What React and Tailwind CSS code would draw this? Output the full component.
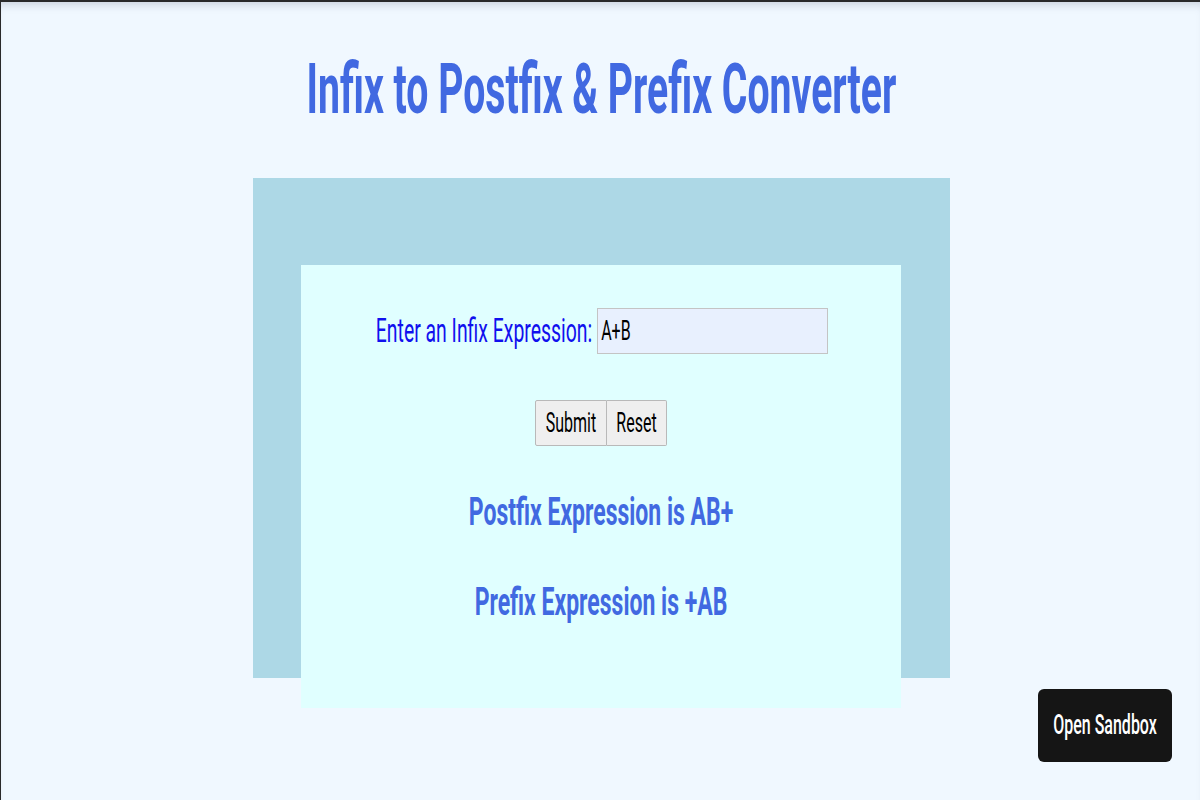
import { useState } from 'react';

// the shot is stretched tall, so text gets a vertical scale
const Tall = ({ children, className = 'scale-y-[1.7]' }) => (
  <span className={`inline-block origin-center ${className}`}>{children}</span>
);

const toPostfix = (expr) => {
  const prec = { '+': 1, '-': 1, '*': 2, '/': 2, '^': 3 };
  const out = [];
  const stack = [];
  for (const ch of expr.replace(/\s+/g, '')) {
    if (/[A-Za-z0-9]/.test(ch)) out.push(ch);
    else if (ch === '(') stack.push(ch);
    else if (ch === ')') {
      while (stack.length && stack[stack.length - 1] !== '(') out.push(stack.pop());
      stack.pop();
    } else {
      while (stack.length && stack[stack.length - 1] !== '(' && prec[stack[stack.length - 1]] >= prec[ch]) out.push(stack.pop());
      stack.push(ch);
    }
  }
  while (stack.length) out.push(stack.pop());
  return out.join('');
};

const toPrefix = (expr) => {
  const rev = expr
    .split('')
    .reverse()
    .map((c) => (c === '(' ? ')' : c === ')' ? '(' : c))
    .join('');
  return toPostfix(rev).split('').reverse().join('');
};

export default function App() {
  const [value, setValue] = useState('A+B');
  const [result, setResult] = useState({ post: 'AB+', pre: '+AB' });

  const handleSubmit = () => setResult({ post: toPostfix(value), pre: toPrefix(value) });
  const handleReset = () => {
    setValue('');
    setResult({ post: '', pre: '' });
  };

  return (
    <div
      className="relative h-[800px] w-[1200px] overflow-hidden border-t-2 border-l border-[#2a2a2a] bg-[#f0f8ff] shadow-[inset_0_8px_10px_-6px_rgba(120,130,150,0.35)]"
      style={{ fontFamily: 'Roboto, "Noto Sans", sans-serif' }}
    >
      <div className="flex h-[176px] flex-col items-center pt-[63px]">
        <h1 className="text-[39.2px] font-bold leading-[50px] text-[#4169e1]">
          <Tall className="ml-[2px] scale-y-[1.8]">Infix to Postfix &amp; Prefix Converter</Tall>
        </h1>
      </div>

      <div className="ml-[252px] h-[500px] w-[697px] bg-[#add8e6] px-[48px] pt-[87px]">
        <div className="flex h-[443px] w-[600px] flex-col items-center bg-[#e0ffff] pt-[43px]">
          <div className="flex items-center gap-[5px] pl-[2px]">
            <label className="text-[19.4px] text-[#1010ee]">
              <Tall>Enter an Infix Expression:</Tall>
            </label>
            <div className="flex h-[46px] w-[231px] items-center border border-[#c4c4c4] bg-[#e8f0fe] px-[3px] text-[16px] text-black">
              <Tall>
                <input
                  value={value}
                  onChange={(e) => setValue(e.target.value)}
                  className="w-[220px] bg-transparent outline-none"
                />
              </Tall>
            </div>
          </div>

          <div className="mt-[46px] flex">
            <button
              onClick={handleSubmit}
              className="h-[46px] w-[72px] rounded-l-[2px] border border-[#b9b9b9] bg-[#efefef] text-[16px] text-black"
            >
              <Tall>Submit</Tall>
            </button>
            <button
              onClick={handleReset}
              className="h-[46px] w-[60px] rounded-r-[2px] border border-l-0 border-[#b9b9b9] bg-[#efefef] text-[16px] text-black"
            >
              <Tall>Reset</Tall>
            </button>
          </div>

          <h2 className="mt-[52px] text-[23px] font-bold leading-[30px] text-[#4169e1]">
            <Tall>Postfix Expression is {result.post}</Tall>
          </h2>
          <h2 className="mt-[60px] text-[23px] font-bold leading-[30px] text-[#4169e1]">
            <Tall>Prefix Expression is {result.pre}</Tall>
          </h2>
        </div>
      </div>

      <button className="absolute left-[1037px] top-[687px] h-[73px] w-[134px] rounded-[6px] bg-[#151515] text-[16px] font-medium text-white">
        <Tall>Open Sandbox</Tall>
      </button>
    </div>
  );
}
